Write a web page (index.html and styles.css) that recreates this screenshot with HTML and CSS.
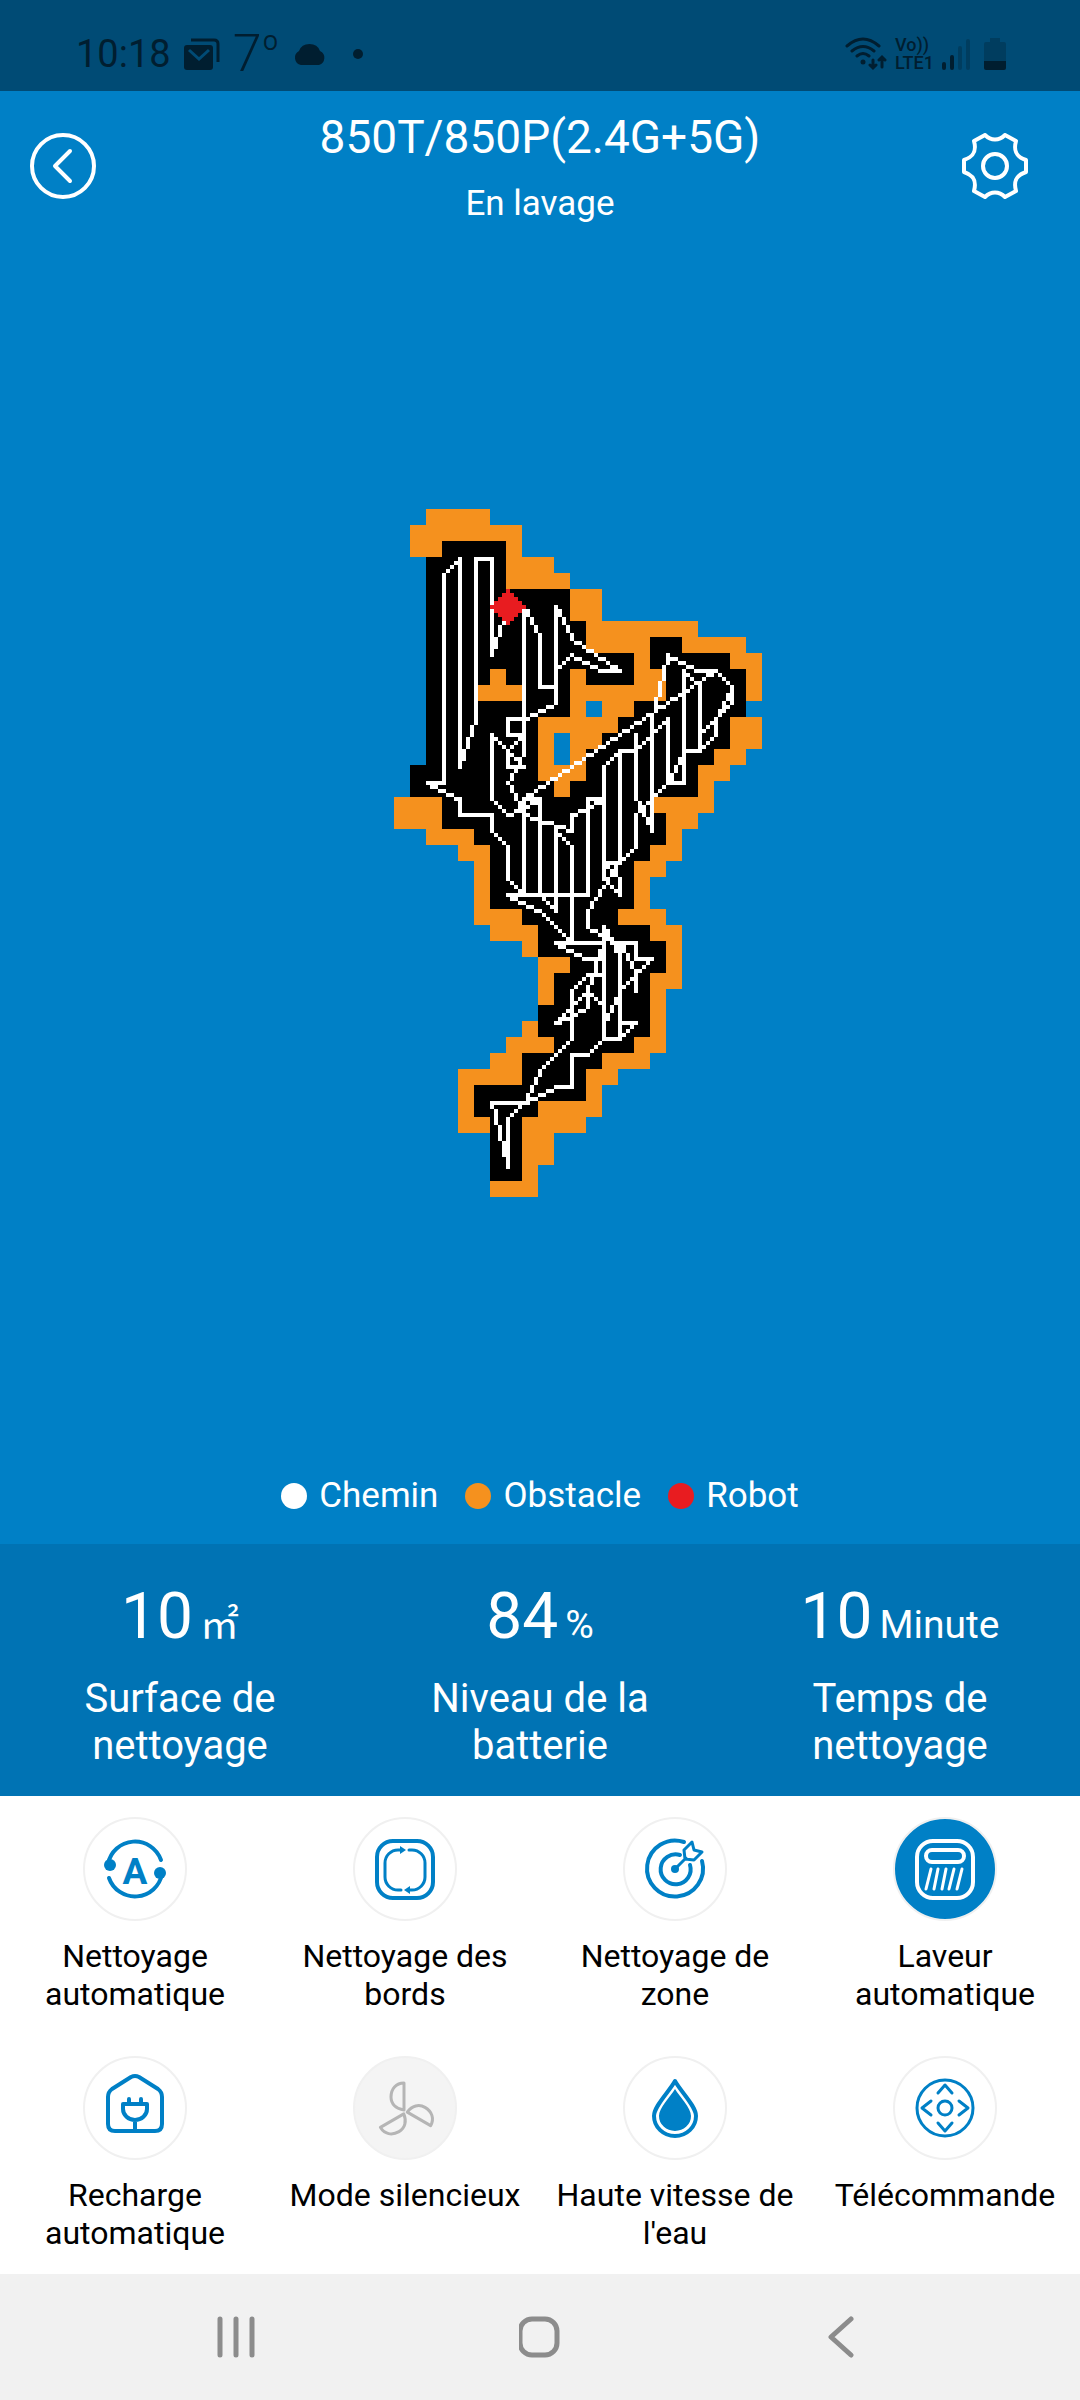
FILE: index.html
```html
<!DOCTYPE html>
<html lang="fr">
<head>
  <meta charset="UTF-8">
  <meta name="viewport" content="width=device-width, initial-scale=1.0">
  <title>850T/850P(2.4G+5G)</title>
  <link rel="stylesheet" href="styles.css">
</head>
<body>

<!-- Status Bar -->
<div class="statusbar">
  <div class="status-left">
    <span class="clock">10:18</span>
    <svg width="36" height="32" viewBox="0 0 36 32">
      <path d="M7 2H30Q34 2 34 6V24" fill="none" stroke="currentColor" stroke-width="3"/>
      <rect x="0" y="7" width="29" height="25" rx="3" fill="currentColor"/>
      <path d="M5 12L15 21L25 12" fill="none" stroke="#004b75" stroke-width="3"/>
    </svg>
    <span class="temp">7<span class="degree">º</span></span>
    <svg width="34" height="24" viewBox="0 0 34 24">
      <path d="M8 23A7.500 7.500 0 0 1 6 9A11 10 0 0 1 27 9A7.500 7.500 0 0 1 26 23Z" fill="currentColor"/>
    </svg>
    <span class="more-dot"></span>
  </div>
  <div class="status-right">
    <svg width="42" height="34" viewBox="0 0 42 34" fill="none" stroke="currentColor" stroke-width="3" stroke-linecap="round">
      <path d="M2 9Q18 -5 34 9M7 14Q18 5 29 14M12 19Q18 14 24 19"/>
      <circle cx="18" cy="25" r="2.500" fill="currentColor" stroke="none"/>
      <path d="M28 23V30M25 28L28 31L31 28M37 30V21M34 23L37 20L40 23"/>
    </svg>
    <span class="volte"><span>Vo))</span><span>LTE1</span></span>
    <svg width="28" height="32" viewBox="0 0 28 32" stroke="currentColor" stroke-width="4" stroke-linecap="round">
      <path d="M2 26V30M10 19V30"/>
      <path class="dim" d="M18 10V30M26 3V30"/>
    </svg>
    <svg class="battery" width="22" height="34" viewBox="0 0 22 34" fill="currentColor">
      <path class="dim" d="M6 1H16V5H20Q22 5 22 7V24H0V7Q0 5 2 5H6Z"/>
      <path d="M0 24H22V31Q22 33 20 33H2Q0 33 0 31Z"/>
    </svg>
  </div>
</div>

<!-- Header Section -->
<div class="header">
  <button class="icon-button back" aria-label="Retour">
    <svg width="66" height="66" viewBox="-33 -33 66 66">
      <circle r="31"/>
      <path d="M7 -15L-8 0L7 15"/>
    </svg>
  </button>
  <div class="heading">
    <h1>850T/850P(2.4G+5G)</h1>
    <p>En lavage</p>
  </div>
  <button class="icon-button settings" aria-label="Paramètres">
    <svg width="66" height="66" viewBox="-33 -33 66 66">
      <path d="M-10 -31L-21 -25C-18 -14 -22 -9 -31 -6V6C-22 9 -18 14 -21 25L-10 31C-4 25 4 25 10 31L21 25C18 14 22 9 31 6V-6C22 -9 18 -14 21 -25L10 -31C4 -25 -4 -25 -10 -31Z"/>
      <circle r="12"/>
    </svg>
  </button>
</div>

<!-- Cleaning Map -->
<div class="map">
  <canvas id="map" width="92" height="172"></canvas>
</div>

<div class="legend">
  <span><i class="dot path"></i>Chemin</span>
  <span><i class="dot obstacle"></i>Obstacle</span>
  <span><i class="dot robot"></i>Robot</span>
</div>

<!-- Stats -->
<div class="stats">
  <div class="stat">
    <div class="value">10<span class="unit">㎡</span></div>
    <div class="label">Surface de nettoyage</div>
  </div>
  <div class="stat">
    <div class="value">84<span class="unit">%</span></div>
    <div class="label">Niveau de la batterie</div>
  </div>
  <div class="stat">
    <div class="value">10<span class="unit">Minute</span></div>
    <div class="label">Temps de nettoyage</div>
  </div>
</div>

<!-- Actions -->
<div class="actions">
  <button class="action">
    <svg viewBox="-53 -53 106 106">
      <circle class="ring" r="51"/>
      <g class="line" stroke-width="4">
        <path d="M-27 -5A27.500 27.500 0 0 1 26 -9M-26 9A27.500 27.500 0 0 0 27 5"/>
      </g>
      <circle class="solid" cx="-25" cy="-4" r="6"/>
      <circle class="solid" cx="25" cy="4" r="6"/>
      <text class="letter" x="0" y="15" text-anchor="middle">A</text>
    </svg>
    <span>Nettoyage automatique</span>
  </button>
  <button class="action">
    <svg viewBox="-53 -53 106 106">
      <circle class="ring" r="51"/>
      <rect class="line" x="-28" y="-28" width="56" height="57" rx="16" stroke-width="4"/>
      <path class="line" stroke-width="3" d="M-4 21H-7A13 13 0 0 1 -20 8V-6A13 13 0 0 1 -7 -19H-3M4 -19H7A13 13 0 0 1 20 -6V8A13 13 0 0 1 7 21H4"/>
      <path class="solid" d="M-5 -23L1 -19L-5 -15ZM5 17L-1 21L5 25Z"/>
    </svg>
    <span>Nettoyage des bords</span>
  </button>
  <button class="action">
    <svg viewBox="-53 -53 106 106">
      <circle class="ring" r="51"/>
      <g class="line" stroke-width="4">
        <path d="M9 -27A28 28 0 1 0 27 -8"/>
        <path d="M5 -14A15 15 0 1 0 15 -4"/>
      </g>
      <path class="line" stroke-width="3" d="M0 0L11 -11M10 -10L9 -19L17 -27L19 -19L27 -17L19 -9Z"/>
      <circle class="solid" r="4"/>
    </svg>
    <span>Nettoyage de zone</span>
  </button>
  <button class="action active">
    <svg viewBox="-53 -53 106 106">
      <circle class="ring" r="51"/>
      <rect class="line" x="-28" y="-28" width="56" height="57" rx="16" stroke-width="4"/>
      <rect class="line" x="-19" y="-19" width="38" height="12" rx="6" stroke-width="4"/>
      <path class="line" stroke-width="3" d="M-14 0L-19 20M-7 0L-11 20M1 0L-3 20M9 0L4 20M17 0L12 20"/>
    </svg>
    <span>Laveur automatique</span>
  </button>
  <button class="action">
    <svg viewBox="-53 -53 106 106">
      <circle class="ring" r="51"/>
      <g class="line" stroke-width="4">
        <path d="M-27 -11Q-27 -16 -23 -19L-4 -31Q0 -33 4 -31L23 -19Q27 -16 27 -11V16Q27 23 20 23H-20Q-27 23 -27 16Z"/>
        <path d="M-6 -9V-5M6 -9V-5M-12 -4H12V1A12 11 0 0 1 -12 1ZM0 12V23"/>
      </g>
    </svg>
    <span>Recharge automatique</span>
  </button>
  <button class="action disabled" disabled>
    <svg viewBox="-53 -53 106 106">
      <circle class="ring" r="51"/>
      <g class="line" stroke-width="3">
        <path id="blade" d="M-1 -25C-9 -25 -14 -19 -14 -11C-14 -4 -9 1 -1 2Z"/>
        <use href="#blade" transform="rotate(120 0 4)"/>
        <use href="#blade" transform="rotate(240 0 4)"/>
      </g>
    </svg>
    <span>Mode silencieux</span>
  </button>
  <button class="action">
    <svg viewBox="-53 -53 106 106">
      <circle class="ring" r="51"/>
      <path class="line" stroke-width="4" d="M0 -27C6 -16 21 -2 21 8A21 20 0 0 1 -21 8C-21 -2 -6 -16 0 -27Z"/>
      <path class="solid" d="M0 -19C5 -11 16 0 16 8A16 15 0 0 1 -16 8C-16 0 -5 -11 0 -19Z"/>
    </svg>
    <span>Haute vitesse de l'eau</span>
  </button>
  <button class="action">
    <svg viewBox="-53 -53 106 106">
      <circle class="ring" r="51"/>
      <g class="line" stroke-width="3">
        <circle r="28"/>
        <circle r="7"/>
        <path d="M-7 -15L0 -23L7 -15M-7 15L0 23L7 15M-14 -7L-23 0L-14 7M14 -7L23 0L14 7"/>
      </g>
    </svg>
    <span>Télécommande</span>
  </button>
</div>

<!-- Navigation Bar -->
<div class="navbar">
  <button aria-label="Applications récentes">
    <svg width="42" height="42" viewBox="0 0 42 42"><path d="M3 3V39M19 3V39M35 3V39"/></svg>
  </button>
  <button aria-label="Accueil">
    <svg width="42" height="42" viewBox="0 0 42 42"><rect x="1" y="3" width="37" height="36" rx="12"/></svg>
  </button>
  <button aria-label="Précédent">
    <svg width="42" height="42" viewBox="0 0 42 42"><path d="M30 3L10 21L30 39"/></svg>
  </button>
</div>

<script src="script.js"></script>
</body>
</html>
```
FILE: styles.css
```css
/* General Styles */
* {
  box-sizing: border-box;
}

body {
  display: flex;
  flex-direction: column;
  min-height: 100vh;
  margin: 0;
  font-family: Roboto, "Noto Sans CJK SC", sans-serif;
  background-color: #0080c6;
  color: white;
}

button {
  padding: 0;
  border: none;
  background: none;
  font: inherit;
  color: inherit;
}

svg {
  display: block;
}

/* Status Bar */
.statusbar {
  display: flex;
  justify-content: space-between;
  align-items: center;
  height: 91px;
  padding: 16px 74px 0 76px;
  background-color: #004b75;
  color: #001e30;
}

.status-left,
.status-right {
  display: flex;
  align-items: center;
}

.status-left {
  gap: 13px;
}

.clock {
  font-size: 38px;
}

.temp {
  font-size: 52px;
  font-weight: 300;
  line-height: 52px;
}

.degree {
  font-size: 40px;
  line-height: 40px;
  vertical-align: 8px;
}

.more-dot {
  width: 10px;
  height: 10px;
  margin-left: 13px;
  border-radius: 50%;
  background-color: currentColor;
}

.status-right {
  gap: 8px;
}

.volte {
  display: flex;
  flex-direction: column;
  font-size: 18px;
  font-weight: 500;
  line-height: 18px;
}

.dim {
  opacity: 0.3;
}

.battery {
  margin-left: 6px;
}

/* Header Style */
.header {
  display: grid;
  grid-template-columns: 1fr auto 1fr;
  align-items: center;
  padding: 16px 0 6px;
}

.icon-button svg {
  fill: none;
  stroke: white;
  stroke-width: 4;
  stroke-linecap: round;
  stroke-linejoin: round;
}

.back {
  justify-self: start;
  margin-left: 30px;
}

.settings {
  justify-self: end;
  margin-right: 52px;
}

.heading {
  text-align: center;
}

.heading h1 {
  margin: 0;
  font-size: 46px;
  font-weight: 400;
  line-height: 60px;
}

.heading p {
  margin: 17px 0 0;
  font-size: 35px;
  line-height: 40px;
}

/* Cleaning Map */
.map {
  display: flex;
  flex: 1;
  justify-content: center;
  align-items: center;
  padding-left: 7%;
}

.map canvas {
  width: 368px;
  image-rendering: pixelated;
}

.legend {
  display: flex;
  justify-content: center;
  gap: 27px;
  padding-bottom: 27px;
  font-size: 35px;
  line-height: 42px;
}

.legend span {
  display: flex;
  align-items: center;
  gap: 12px;
}

.dot {
  width: 26px;
  height: 26px;
  border-radius: 50%;
}

.dot.path {
  background-color: white;
}

.dot.obstacle {
  background-color: #f5911e;
}

.dot.robot {
  background-color: #e81c20;
}

/* Stats */
.stats {
  display: grid;
  grid-template-columns: repeat(3, 1fr);
  padding: 33px 0 27px;
  background-color: #0073b4;
  text-align: center;
}

.value {
  font-size: 64px;
  line-height: 80px;
}

.unit {
  margin-left: 7px;
  font-size: 39px;
  line-height: 38px;
}

.label {
  margin-top: 18px;
  padding: 0 48px;
  font-size: 40px;
  line-height: 47px;
}

/* Actions */
.actions {
  display: grid;
  grid-template-columns: repeat(4, 1fr);
  row-gap: 42px;
  padding: 20px 0 22px;
  background-color: white;
  color: black;
}

.action {
  display: flex;
  flex-direction: column;
  align-items: center;
  gap: 15px;
  padding: 0 8px;
  font-size: 32px;
  line-height: 38px;
  color: black;
}

.action svg {
  width: 106px;
  height: 106px;
}

.ring {
  fill: white;
  stroke: #f0f0f0;
  stroke-width: 2;
}

.line {
  fill: none;
  stroke: #0080c6;
  stroke-linecap: round;
  stroke-linejoin: round;
}

.solid,
.letter {
  fill: #0080c6;
}

.letter {
  font-size: 37px;
  font-weight: 700;
}

.active .ring {
  fill: #0080c6;
}

.active .line {
  stroke: white;
}

.disabled .ring {
  fill: #f4f4f4;
}

.disabled .line {
  stroke: #b5b5b5;
}

/* Navigation Bar */
.navbar {
  display: flex;
  justify-content: center;
  align-items: center;
  gap: 260px;
  height: 126px;
  background-color: #f1f1f1;
}

.navbar svg {
  fill: none;
  stroke: #8c8c8c;
  stroke-width: 5;
  stroke-linecap: round;
  stroke-linejoin: round;
}
```
FILE: script.js
```javascript
// Every map cell is 4 x 4 canvas pixels
var CELL = 4;
var canvas = document.getElementById("map");
var ctx = canvas.getContext("2d");

var obstacle = [[2,0],[6,0],[6,1],[8,1],[8,3],[10,3],[10,4],[11,4],[11,5],[13,5],[13,7],[19,7],[19,8],[22,8],[22,9],[23,9],
  [23,12],[22,12],[22,13],[23,13],[23,15],[22,15],[22,16],[21,16],[21,17],[20,17],[20,19],[19,19],[19,20],[18,20],[18,22],
  [17,22],[17,23],[16,23],[16,25],[17,25],[17,26],[18,26],[18,30],[17,30],[17,34],[16,34],[16,35],[14,35],[14,36],[13,36],
  [13,38],[12,38],[12,39],[10,39],[10,41],[9,41],[9,43],[6,43],[6,39],[4,39],[4,35],[6,35],[6,34],[7,34],[7,33],[8,33],
  [8,32],[9,32],[9,28],[8,28],[8,27],[6,27],[6,26],[5,26],[5,22],[4,22],[4,21],[2,21],[2,20],[0,20],[0,18],[1,18],[1,16],
  [2,16],[2,3],[1,3],[1,1],[2,1]];

var floor = [[3,2],[7,2],[7,5],[11,5],[11,7],[12,7],[12,9],[15,9],[15,11],[12,11],[12,10],[11,10],[11,13],[9,13],[9,17],
  [10,17],[10,18],[11,18],[11,17],[12,17],[12,15],[13,15],[13,14],[14,14],[14,13],[15,13],[15,12],[17,12],[17,10],[16,10],
  [16,8],[18,8],[18,9],[21,9],[21,10],[22,10],[22,13],[21,13],[21,15],[20,15],[20,16],[19,16],[19,18],[16,18],[16,19],
  [17,19],[17,21],[16,21],[16,22],[15,22],[15,25],[14,25],[14,26],[16,26],[16,27],[17,27],[17,29],[16,29],[16,33],[15,33],
  [15,34],[13,34],[13,35],[12,35],[12,37],[9,37],[9,38],[8,38],[8,42],[6,42],[6,38],[5,38],[5,36],[8,36],[8,34],[10,34],
  [10,33],[9,33],[9,31],[10,31],[10,29],[11,29],[11,28],[9,28],[9,26],[8,26],[8,25],[6,25],[6,21],[5,21],[5,20],[3,20],
  [3,18],[1,18],[1,16],[2,16],[2,3],[3,3]];

var paths = [
  [[7,6],[6,9],[6,3],[5,3],[5,13],[4,16],[4,3],[3,4],[3,17],[2,17],[4,18],[4,19],[6,19],[6,20],[7,21],[7,23],[8,24]],
  [[8,15],[8,6],[9,8],[9,11],[10,11]],
  [[10,10],[11,9],[13,10],[14,10],[11,8],[10,6],[10,12],[8,13],[7,13],[7,14],[8,14],[7,15],[7,16],[8,16],[7,15],[6,14],[6,18],[7,19],[9,18]],
  [[8,15],[7,17],[8,19],[11,20],[11,19],[13,18]],
  [[20,10],[8,18],[8,24]],
  [[8,18],[9,18],[9,24],[10,25],[10,20],[11,21],[11,27]],
  [[13,18],[12,18],[12,24],[7,24],[9,25],[11,27]],
  [[13,23],[13,16],[14,15],[14,22]],
  [[14,15],[15,15],[17,13],[17,17],[18,17],[18,10],[19,11],[19,15],[20,14],[20,13],[21,11]],
  [[15,14],[15,18],[16,20],[16,13],[17,9],[19,10],[20,10],[21,11],[21,12],[19,14]],
  [[17,17],[18,15],[19,15]],
  [[17,17],[15,19],[15,21],[14,22],[13,22],[14,23],[14,24],[13,23]],
  [[14,22],[12,25],[12,26],[14,27]],
  [[10,27],[13,27],[12,30],[12,31],[10,32],[12,30],[13,31]],
  [[10,27],[12,28],[13,28]],
  [[13,29],[12,29],[11,30],[11,33],[9,35],[8,37],[7,38],[7,41],[6,37],[8,37],[10,36],[11,36],[11,34],[12,34],[13,33]],
  [[14,28],[13,26],[13,33],[14,33],[14,27],[15,27],[15,28],[16,28],[14,30],[13,32]],
  [[14,27],[15,29],[15,30]],
  [[14,32],[15,32],[14,33]]
];

function fillShape(points, color) {
  ctx.fillStyle = color;
  ctx.beginPath();
  points.forEach(function (p) {
    ctx.lineTo(p[0] * CELL, p[1] * CELL);
  });
  ctx.fill();
}

function fillCells(x, y, w, h, color) {
  ctx.fillStyle = color;
  ctx.fillRect(x * CELL, y * CELL, w * CELL, h * CELL);
}

// Line without antialiasing
function drawLine(a, b) {
  var x = a[0] * CELL, y = a[1] * CELL;
  var dx = b[0] * CELL - x, dy = b[1] * CELL - y;
  var steps = Math.max(Math.abs(dx), Math.abs(dy));
  for (var i = 0; i <= steps; i++) {
    ctx.fillRect(Math.round(x + dx * i / steps), Math.round(y + dy * i / steps), 1, 1);
  }
}

fillShape(obstacle, "#f5911e");
fillShape(floor, "#000");
fillCells(6, 10, 1, 1, "#f5911e");
fillCells(5, 11, 3, 1, "#f5911e");
fillCells(10, 14, 1, 2, "#0080c6");
fillCells(12, 12, 1, 1, "#0080c6");

ctx.fillStyle = "#fff";
paths.forEach(function (path) {
  for (var i = 1; i < path.length; i++) {
    drawLine(path[i - 1], path[i]);
  }
});

// Robot
ctx.fillStyle = "#e81c20";
for (var r = -4; r <= 4; r++) {
  var half = 4 - Math.abs(r);
  ctx.fillRect(7 * CELL - half, 6 * CELL + r, half * 2 + 1, 1);
}
```
